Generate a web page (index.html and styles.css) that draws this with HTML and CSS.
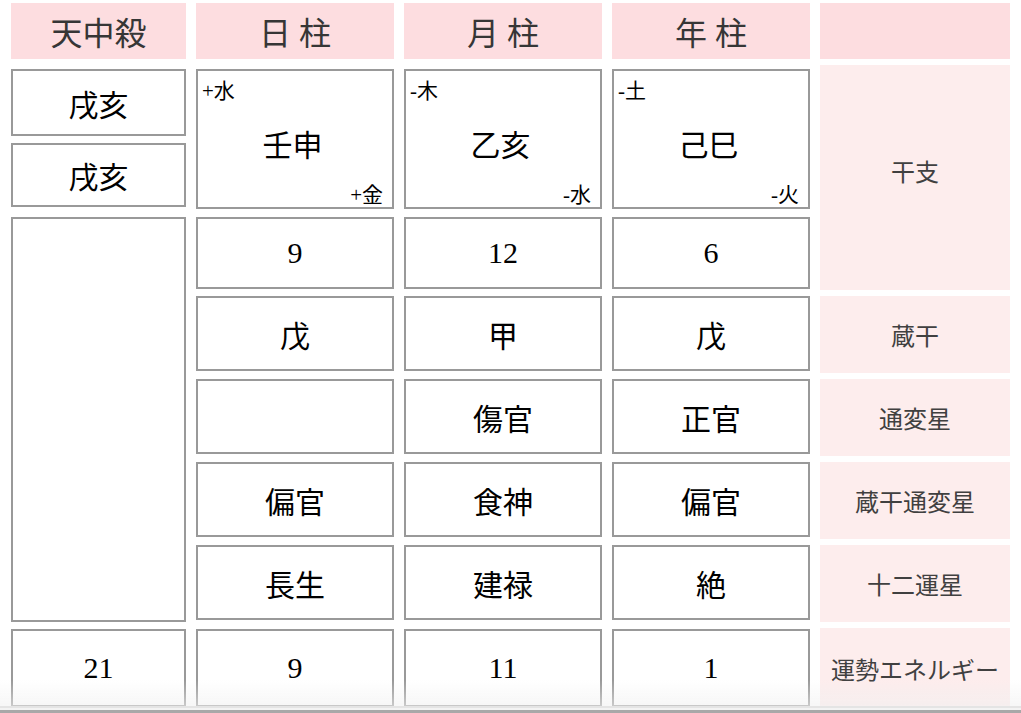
FILE: index.html
```html
<!DOCTYPE html>
<html lang="ja">
<head>
<meta charset="utf-8">
<title>命式</title>
<link rel="stylesheet" href="styles.css">
</head>
<body>
<div class="chart">
  <div class="hd">天中殺</div>
  <div class="hd">日 柱</div>
  <div class="hd">月 柱</div>
  <div class="hd">年 柱</div>
  <div class="hd"></div>

  <div class="stack">
    <div class="box tc-a">戌亥</div>
    <div class="box tc-b">戌亥</div>
  </div>
  <div class="box stem">
    <div class="el-top">+水</div>
    <div class="el-main">壬申</div>
    <div class="el-bot">+金</div>
  </div>
  <div class="box stem">
    <div class="el-top">-木</div>
    <div class="el-main">乙亥</div>
    <div class="el-bot">-水</div>
  </div>
  <div class="box stem">
    <div class="el-top">-土</div>
    <div class="el-main">己巳</div>
    <div class="el-bot">-火</div>
  </div>
  <div class="lbl span2">干支</div>

  <div class="box tall"></div>
  <div class="box num">9</div>
  <div class="box num">12</div>
  <div class="box num">6</div>

  <div class="box row">戊</div>
  <div class="box row">甲</div>
  <div class="box row">戊</div>
  <div class="lbl">蔵干</div>

  <div class="box row"></div>
  <div class="box row">傷官</div>
  <div class="box row">正官</div>
  <div class="lbl">通変星</div>

  <div class="box row">偏官</div>
  <div class="box row">食神</div>
  <div class="box row">偏官</div>
  <div class="lbl">蔵干通変星</div>

  <div class="box row">長生</div>
  <div class="box row">建禄</div>
  <div class="box row">絶</div>
  <div class="lbl">十二運星</div>

  <div class="box last">21</div>
  <div class="box last">9</div>
  <div class="box last">11</div>
  <div class="box last">1</div>
  <div class="lbl">運勢エネルギー</div>
</div>
<div class="shade"></div>
<div class="edge"></div>
</body>
</html>
```

FILE: styles.css
```css
html, body {
  margin: 0;
  padding: 0;
  background: #ffffff;
  overflow: hidden;
}

body {
  font-family: "Liberation Serif", "Noto Sans CJK JP", serif;
  color: #000;
}

.chart {
  display: grid;
  grid-template-columns: 175px 198px 198px 198px 190px;
  grid-template-rows: 56px 146px 73px 77px 77px 77px 77px 80px;
  gap: 6px 10px;
  padding: 3px 0 0 11px;
}

.hd {
  background: #fddde0;
  color: #363636;
  font-size: 32px;
  display: flex;
  align-items: center;
  justify-content: center;
  white-space: pre;
}

.lbl {
  background: #fdeded;
  color: #404040;
  font-size: 24px;
  display: flex;
  align-items: center;
  justify-content: center;
  white-space: nowrap;
}

.span2 {
  grid-row: span 2;
  padding-bottom: 15px;
}

.box {
  box-sizing: border-box;
  border: 2px solid #999;
  background: #fff;
  font-size: 30px;
  display: flex;
  align-items: center;
  justify-content: center;
}

.stack {
  margin-top: 4px;
  display: flex;
  flex-direction: column;
  gap: 7px;
}

.tc-a { height: 67px; }
.tc-b { height: 64px; }

.stem {
  margin-top: 4px;
  height: 140px;
  flex-direction: column;
  align-items: stretch;
  justify-content: space-between;
  padding: 8px 9px 0 4px;
}

.el-top,
.el-bot {
  font-size: 21px;
  line-height: 24px;
}

.el-bot {
  text-align: right;
}

.el-main {
  flex: 1;
  display: flex;
  align-items: center;
  justify-content: center;
}

.tall {
  grid-row: span 5;
  height: 405px;
}

.num {
  height: 72px;
}

.row {
  height: 75px;
}

.last {
  height: 78px;
  margin-top: 1px;
}

.shade {
  position: fixed;
  left: 0;
  right: 0;
  bottom: 7px;
  height: 26px;
  background: linear-gradient(to bottom, rgba(245, 245, 245, 0), rgba(240, 240, 240, 0.55));
  pointer-events: none;
}

.edge {
  position: fixed;
  left: 0;
  right: 0;
  bottom: 0;
  height: 7px;
  box-sizing: border-box;
  border-top: 2px solid #e4e4e4;
  border-bottom: 3px solid #a8a8a8;
  background: #f3f3f3;
}
```
